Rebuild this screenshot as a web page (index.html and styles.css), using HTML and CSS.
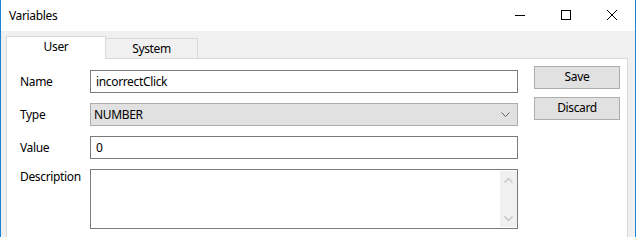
FILE: index.html
```html
<!DOCTYPE html>
<html>
<head>
<meta charset="utf-8">
<title>Variables</title>
<link rel="stylesheet" href="styles.css">
</head>
<body>
<div class="window">
  <div class="titlebar">
    <div class="title">Variables</div>
    <div class="controls">
      <div class="ctl"><svg width="10" height="10" viewBox="0 0 10 10"><line x1="0" y1="5.5" x2="10" y2="5.5" stroke="#000" stroke-width="1"/></svg></div>
      <div class="ctl"><svg width="10" height="10" viewBox="0 0 10 10"><rect x="0.5" y="0.5" width="9" height="9" fill="none" stroke="#000" stroke-width="1"/></svg></div>
      <div class="ctl"><svg width="10" height="10" viewBox="0 0 10 10"><path d="M0 0L10 10M10 0L0 10" stroke="#000" stroke-width="1"/></svg></div>
    </div>
  </div>
  <div class="body">
    <div class="tabs">
      <div class="tab active">User</div>
      <div class="tab">System</div>
    </div>
    <div class="panel">
      <div class="form">
        <div class="label">Name</div>
        <div class="input">incorrectClick</div>
        <div class="label">Type</div>
        <div class="select"><span>NUMBER</span><svg width="9" height="5" viewBox="0 0 9 5"><path d="M0.5 0.5L4.5 4.5L8.5 0.5" fill="none" stroke="#606060" stroke-width="1"/></svg></div>
        <div class="label">Value</div>
        <div class="input">0</div>
        <div class="label top">Description</div>
        <div class="textarea">
          <div class="scroll">
            <svg width="9" height="5" viewBox="0 0 9 5"><path d="M0.5 4.5L4.5 0.5L8.5 4.5" fill="none" stroke="#c0c0c0" stroke-width="1.2"/></svg>
            <svg width="9" height="5" viewBox="0 0 9 5"><path d="M0.5 0.5L4.5 4.5L8.5 0.5" fill="none" stroke="#c0c0c0" stroke-width="1.2"/></svg>
          </div>
        </div>
      </div>
      <div class="buttons">
        <div class="btn">Save</div>
        <div class="btn">Discard</div>
      </div>
    </div>
  </div>
</div>
</body>
</html>
```

FILE: styles.css
```css
html, body {
  margin: 0;
  padding: 0;
  background: #f0f0f0;
}
body {
  font-family: "Noto Sans", "Open Sans", sans-serif;
  font-size: 12px;
  letter-spacing: -0.35px;
  color: #000;
}
.window {
  width: 636px;
  height: 237px;
  box-sizing: border-box;
  border-left: 1px solid #1883d7;
  border-right: 1px solid #1883d7;
  background: #f0f0f0;
  overflow: hidden;
}
.titlebar {
  height: 31px;
  background: #fff;
  display: flex;
  justify-content: space-between;
  align-items: stretch;
}
.title {
  padding-left: 8px;
  line-height: 31px;
}
.controls {
  display: flex;
}
.ctl {
  width: 46px;
  display: flex;
  align-items: center;
  justify-content: center;
  padding-bottom: 1px;
}
.body {
  padding: 5px 7px 0 5px;
}
.tabs {
  display: flex;
  align-items: flex-end;
  height: 22px;
}
.tab {
  box-sizing: border-box;
  height: 20px;
  width: 92px;
  border-top: 1px solid #d9d9d9;
  border-right: 1px solid #d9d9d9;
  background: #f0f0f0;
  text-align: center;
  line-height: 20px;
}
.tab.active {
  position: relative;
  z-index: 1;
  width: 100px;
  height: 23px;
  margin-bottom: -1px;
  border-left: 1px solid #d9d9d9;
  background: #fff;
  line-height: 20px;
}
.panel {
  border: 1px solid #d9d9d9;
  background: #fff;
  height: 200px;
  padding: 7px 0 0 13px;
  display: flex;
  align-items: flex-start;
}
.form {
  margin-top: 4px;
  display: grid;
  grid-template-columns: 70px 428px;
  row-gap: 10px;
  align-items: center;
}
.label {
  line-height: 16px;
}
.label.top {
  align-self: start;
}
.input, .select {
  box-sizing: border-box;
  height: 23px;
  border: 1px solid #7a7a7a;
  background: #fff;
  padding-left: 5px;
  line-height: 21px;
}
.select {
  background: #e1e1e1;
  border-color: #adadad;
  padding-left: 3px;
  padding-right: 7px;
  display: flex;
  justify-content: space-between;
  align-items: center;
}
.textarea {
  box-sizing: border-box;
  height: 60px;
  border: 1px solid #7a7a7a;
  background: #fff;
  display: flex;
  justify-content: flex-end;
  padding: 1px 0 1px 0;
}
.scroll {
  width: 17px;
  background: #f0f0f0;
  display: flex;
  flex-direction: column;
  justify-content: space-between;
  align-items: center;
  padding: 7px 0 6px;
  box-sizing: border-box;
}
.buttons {
  margin-left: 16px;
  display: flex;
  flex-direction: column;
  gap: 8px;
}
.btn {
  box-sizing: border-box;
  width: 86px;
  height: 23px;
  border: 1px solid #adadad;
  background: #e1e1e1;
  text-align: center;
  line-height: 20px;
}
```
